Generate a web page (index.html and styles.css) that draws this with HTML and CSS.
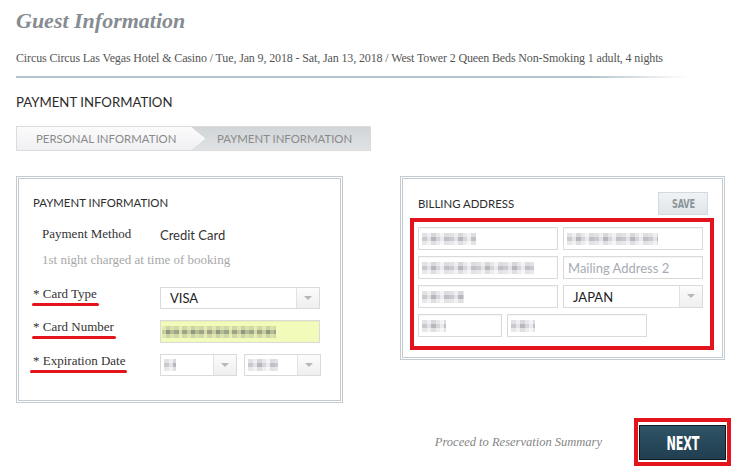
FILE: index.html
```html
<!DOCTYPE html>
<html lang="en">
<head>
<meta charset="utf-8">
<title>Guest Information</title>
<link rel="stylesheet" href="styles.css">
</head>
<body>
<main class="page">
  <h1 class="title">Guest Information</h1>
  <p class="summary">Circus Circus Las Vegas Hotel &amp; Casino / Tue, Jan 9, 2018 - Sat, Jan 13, 2018 / West Tower 2 Queen Beds Non-Smoking 1 adult, 4 nights</p>
  <div class="rule"></div>
  <h2 class="section">PAYMENT INFORMATION</h2>
  <nav class="steps">
    <span class="step step-done">PERSONAL INFORMATION</span>
    <span class="step step-current">PAYMENT INFORMATION</span>
  </nav>

  <div class="panels">
    <section class="panel panel-pay">
      <h3 class="panel-title">PAYMENT INFORMATION</h3>
      <div class="form">
        <div class="lbl plain">Payment Method</div>
        <div class="val">Credit Card</div>
        <div class="note">1st night charged at time of booking</div>

        <div class="lbl req first"><span class="mark-line">* Card Type</span></div>
        <div class="select first"><span class="sel-text">VISA</span><span class="sel-arrow"></span></div>

        <div class="lbl req"><span class="mark-line">* Card Number</span></div>
        <div class="input autofill"><span class="pix pix-card"></span></div>

        <div class="lbl req"><span class="mark-line mark-long">* Expiration Date</span></div>
        <div class="exp">
          <div class="select select-sm"><span class="sel-text"><span class="pix pix-12"></span></span><span class="sel-arrow"></span></div>
          <div class="select select-sm"><span class="sel-text"><span class="pix pix-30"></span></span><span class="sel-arrow"></span></div>
        </div>
      </div>
    </section>

    <section class="panel panel-bill">
      <div class="bill-head">
        <h3 class="panel-title">BILLING ADDRESS</h3>
        <button class="save"><span class="cond">SAVE</span></button>
      </div>
      <div class="redframe">
        <div class="row">
          <div class="input w140"><span class="pix pix-54"></span></div>
          <div class="input w140"><span class="pix pix-91"></span></div>
        </div>
        <div class="row">
          <div class="input w140"><span class="pix pix-112"></span></div>
          <div class="input w140"><span class="ph">Mailing Address 2</span></div>
        </div>
        <div class="row">
          <div class="input w140"><span class="pix pix-42"></span></div>
          <div class="select w140 tall"><span class="sel-text">JAPAN</span><span class="sel-arrow"></span></div>
        </div>
        <div class="row">
          <div class="input w84"><span class="pix pix-24"></span></div>
          <div class="input w140"><span class="pix pix-24"></span></div>
        </div>
      </div>
    </section>
  </div>

  <div class="footer">
    <span class="proceed">Proceed to Reservation Summary</span>
    <div class="next-frame"><button class="next"><span class="cond">NEXT</span></button></div>
  </div>
</main>
</body>
</html>
```

FILE: styles.css
```css
* { box-sizing: border-box; }
html, body { margin: 0; padding: 0; background: #fff; }
body { font-family: "Lato", "Liberation Sans", sans-serif; color: #333; }

.page { padding: 8px 8px 0 16px; width: 739px; }

.title {
  margin: 0;
  font-family: "Liberation Serif", serif;
  font-style: italic;
  font-weight: bold;
  font-size: 22px;
  line-height: 26px;
  color: #868c92;
}

.summary {
  margin: 16px 0 0;
  font-family: "Liberation Serif", serif;
  font-size: 12px;
  line-height: 16px;
  letter-spacing: -0.13px;
  color: #555;
}

.rule {
  margin-top: 10px;
  width: 672px;
  height: 2px;
  background: linear-gradient(to right, #b3c2cc 0, #b3c2cc 85%, rgba(179,194,204,0) 100%);
}

.section {
  margin: 15px 0 0;
  font-size: 13.2px;
  line-height: 18px;
  font-weight: normal;
  color: #2b2b2b;
}

.steps {
  margin-top: 15px;
  width: 355px;
  height: 25px;
  display: flex;
  border: 1px solid #dcdcdc;
  background: linear-gradient(#d1d5d8, #e0e3e5);
}
.step {
  font-size: 11.4px;
  line-height: 23px;
  color: #8a8a8a;
}
.step-done {
  position: relative;
  width: 174px;
  padding-left: 19px;
  background: linear-gradient(#fbfbfc, #f0f0f4);
}
.step-done::before,
.step-done::after {
  content: "";
  position: absolute;
  top: 0;
  height: 23px;
  clip-path: polygon(0 0, 100% 50%, 0 100%);
}
.step-done::before { right: -14px; width: 14px; background: #fff; }
.step-done::after { right: -12px; width: 12px; background: linear-gradient(#fbfbfc, #f0f0f4); }
.step-current { padding-left: 26px; }

.panels {
  margin-top: 25px;
  display: flex;
  align-items: flex-start;
  gap: 57px;
}
.panel {
  border: 3px double #c3cbd0;
  background: #fff;
}
.panel-title {
  margin: 0;
  font-size: 11.4px;
  line-height: 14px;
  font-weight: normal;
  color: #2d2d2d;
}

.panel-pay {
  width: 327px;
  padding: 17px 10px 24px 14px;
}
.form {
  margin-top: 15px;
  display: grid;
  grid-template-columns: 127px 161px;
  row-gap: 11px;
}
.lbl {
  font-family: "Liberation Serif", serif;
  font-size: 13px;
  line-height: 14px;
  color: #333;
}
.lbl.plain { padding-left: 9px; line-height: 18px; }
.val { font-size: 13px; line-height: 18px; color: #333; padding-top: 1px; }
.note {
  grid-column: 1 / 3;
  margin-top: -4px;
  padding-left: 9px;
  font-family: "Liberation Serif", serif;
  font-size: 13px;
  line-height: 18px;
  color: #a8a8a8;
}
.first { margin-top: 7px; }
.mark-line { position: relative; display: inline-block; }
.mark-line::after {
  content: "";
  position: absolute;
  left: -1px;
  right: -2px;
  top: 16px;
  height: 3px;
  border-radius: 2px;
  background: #e3141c;
}
.mark-long::after { left: -3px; }

.input {
  height: 23px;
  border: 1px solid #dadada;
  box-shadow: inset 0 1px 1px rgba(0,0,0,.04);
  background: #fff;
  display: flex;
  align-items: center;
  padding-left: 3px;
}
.autofill { background: #f2fbba; height: 23px; width: 160px; padding-left: 0; }

.select {
  height: 22px;
  width: 160px;
  border: 1px solid #dadada;
  background: #fff;
  display: flex;
}
.select.tall { height: 23px; }
.sel-text {
  flex: 1;
  display: flex;
  align-items: center;
  padding-left: 9px;
  font-size: 13px;
  color: #222;
}
.sel-arrow {
  position: relative;
  width: 23px;
  border-left: 1px solid #e2e2e2;
  background: linear-gradient(#fcfcfc, #efefef);
}
.sel-arrow::after {
  content: "";
  position: absolute;
  left: 7px;
  top: 8px;
  border-left: 4px solid transparent;
  border-right: 4px solid transparent;
  border-top: 4px solid #b8b8b8;
}
.exp { display: flex; gap: 7px; }
.select-sm { width: 77px; }
.select-sm .sel-text { padding-left: 3px; }

.pix {
  display: inline-block;
  height: 12px;
  background-image:
    linear-gradient(to bottom, rgba(255,255,255,.45) 0 4px, rgba(255,255,255,0) 4px 8px, rgba(255,255,255,.55) 8px 12px),
    repeating-linear-gradient(90deg, #cbc9ce 0 5px, #e3e2e6 5px 9px, #b9b7be 9px 14px, #d6d5da 14px 18px, #ebeaee 18px 22px, #c2c0c6 22px 27px);
}
.pix-card {
  height: 12px;
  margin-left: 1px;
  width: 114px;
  background-image:
    linear-gradient(to bottom, rgba(242,251,186,.6) 0 4px, rgba(242,251,186,0) 4px 8px, rgba(242,251,186,.6) 8px 12px),
    repeating-linear-gradient(90deg, #c7cd9f 0 4px, #8f9880 4px 8px, #b6bc94 8px 12px, #9ca58a 12px 17px, #d6dba8 17px 20px, #a0a384 20px 25px);
}
.pix-12 { width: 12px; }
.pix-24 { width: 24px; }
.pix-30 { width: 30px; }
.pix-42 { width: 42px; }
.pix-54 { width: 54px; }
.pix-91 { width: 91px; }
.pix-112 { width: 112px; }

.panel-bill {
  width: 325px;
  padding: 13px 8px 7px 7px;
}
.bill-head {
  display: flex;
  align-items: center;
  justify-content: space-between;
  padding-left: 8px;
  padding-right: 6px;
}
.cond {
  display: inline-block;
  font-family: "DejaVu Sans Condensed", "Liberation Sans Narrow", sans-serif;
  font-stretch: condensed;
  font-weight: bold;
}
.save {
  width: 50px;
  height: 23px;
  padding: 0;
  border: 1px solid #d3d9dc;
  background: linear-gradient(#f0f3f5, #dfe5e8);
  color: #8b959b;
}
.save .cond { font-size: 13px; transform: scaleX(0.7); letter-spacing: -0.2px; }
.redframe {
  margin-top: 3px;
  width: 304px;
  border: 4px solid #e3141c;
  padding: 5px 0 9px 4px;
  display: flex;
  flex-direction: column;
  gap: 6px;
}
.row { display: flex; gap: 5px; }
.w140 { width: 140px; }
.w84 { width: 84px; }
.ph { font-size: 13px; color: #a6abb6; padding-left: 1px; }

.footer {
  margin-top: 15px;
  display: flex;
  justify-content: flex-end;
  align-items: center;
  gap: 32px;
}
.proceed {
  font-family: "Liberation Serif", serif;
  font-style: italic;
  font-size: 12.5px;
  color: #858585;
}
.next-frame {
  border: 4px solid #e3141c;
  padding: 3px 1px 2px 1px;
}
.next {
  display: block;
  width: 87px;
  height: 35px;
  padding: 0;
  border: 1px solid #0f1a20;
  background: linear-gradient(#2f5366, #213f50);
  color: #fff;
}
.next .cond { font-size: 19px; transform: scaleX(0.66); letter-spacing: -0.3px; }
```
